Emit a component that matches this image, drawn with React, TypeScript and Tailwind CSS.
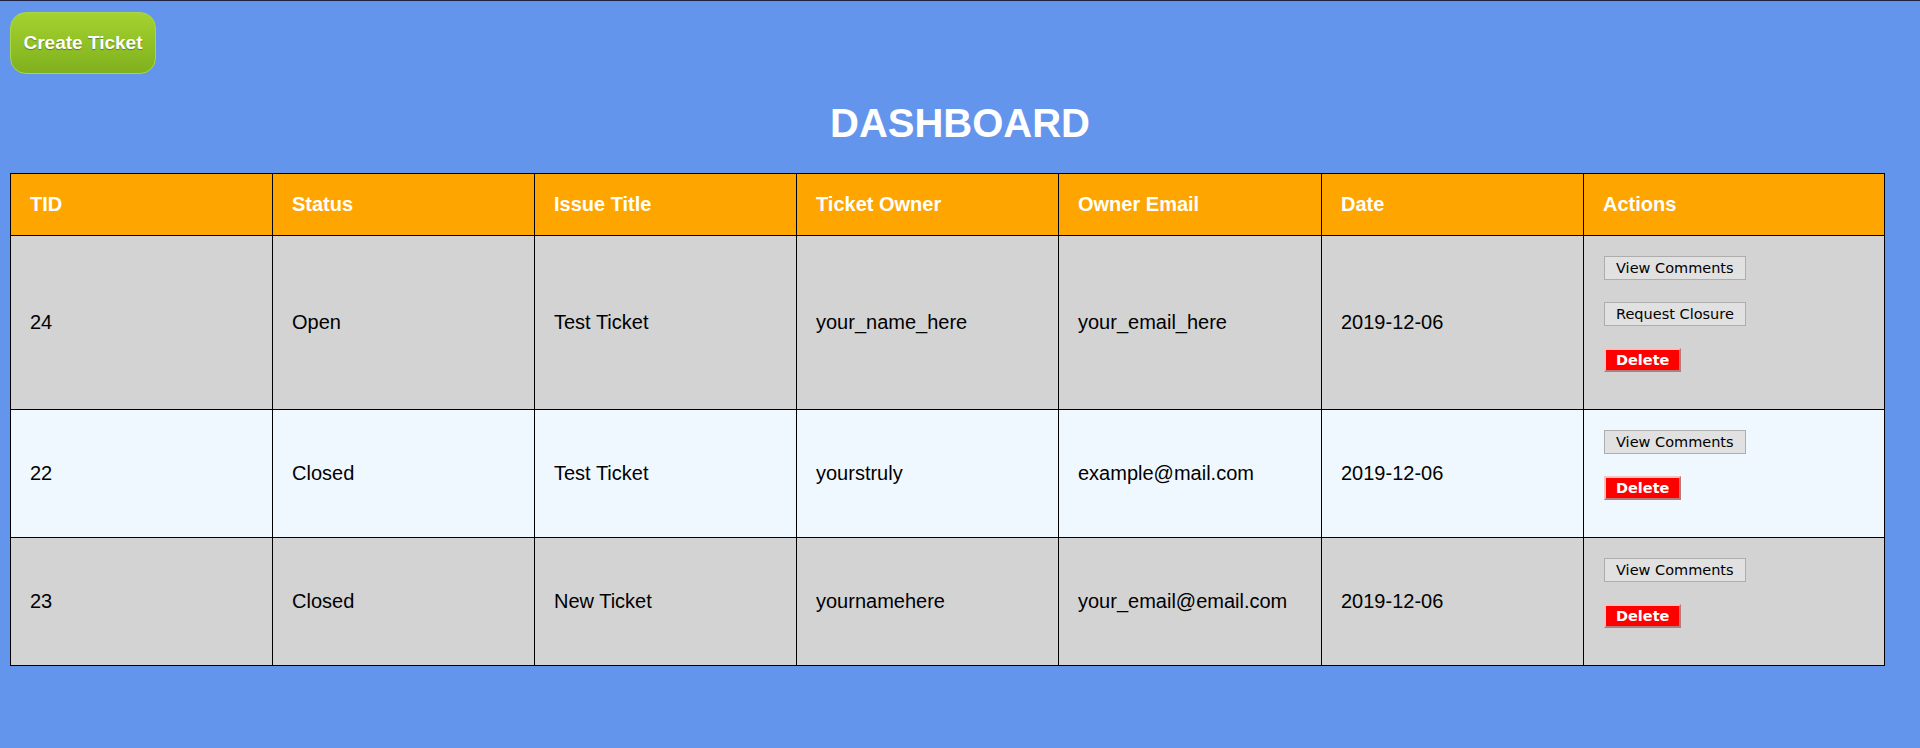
export default function App() {
  const tickets = [
    {
      id: "24",
      status: "Open",
      title: "Test Ticket",
      owner: "your_name_here",
      email: "your_email_here",
      date: "2019-12-06",
      canClose: true,
      bg: "bg-[#d3d3d3]",
    },
    {
      id: "22",
      status: "Closed",
      title: "Test Ticket",
      owner: "yourstruly",
      email: "example@mail.com",
      date: "2019-12-06",
      canClose: false,
      bg: "bg-[#f0f8ff]",
    },
    {
      id: "23",
      status: "Closed",
      title: "New Ticket",
      owner: "yournamehere",
      email: "your_email@email.com",
      date: "2019-12-06",
      canClose: false,
      bg: "bg-[#d3d3d3]",
    },
  ];

  const headers = ["TID", "Status", "Issue Title", "Ticket Owner", "Owner Email", "Date", "Actions"];

  const grayBtn =
    "h-[24px] px-[11px] border border-[#adadad] bg-[#e1e1e1] text-[14.5px] leading-none text-black font-['DejaVu_Sans',Tahoma,sans-serif]";

  return (
    <div className="min-h-[748px] border-t border-[#1b2340] bg-[#6495ed] font-['Liberation_Sans',Arial,sans-serif]">
      <button className="ml-[10px] mt-[11px] flex h-[62px] w-[146px] items-center justify-center rounded-[16px] border border-[#a8d64a] bg-linear-to-b from-[#a5d22f] to-[#7fb11e] text-[19px] font-bold text-white [text-shadow:0_1px_1px_rgba(0,0,0,0.35)]">
        Create Ticket
      </button>

      <h1 className="mt-[26px] text-center text-[40px] font-bold leading-[46px] text-white">
        DASHBOARD
      </h1>

      <table className="ml-[10px] mt-[27px] w-[1875px] table-fixed border-collapse">
        <thead>
          <tr className="bg-[#ffa500]">
            {headers.map((h, i) => (
              <th
                key={h}
                className={`${i === 4 ? "w-[263px]" : i === 6 ? "" : "w-[262px]"} border border-black px-[19px] py-[19px] text-left text-[20px] font-bold leading-[23px] text-white`}
              >
                {h}
              </th>
            ))}
          </tr>
        </thead>
        <tbody>
          {tickets.map((t) => (
            <tr key={t.id} className={t.bg}>
              {[t.id, t.status, t.title, t.owner, t.email, t.date].map((v, i) => (
                <td
                  key={i}
                  className="border border-black px-[19px] py-[20px] align-middle text-[20px] leading-[23px] text-black"
                >
                  {v}
                </td>
              ))}
              <td className="border border-black px-[20px] pt-[20px] pb-[37px] align-top">
                <div className="flex flex-col items-start gap-[22px]">
                  <button className={grayBtn}>View Comments</button>
                  {t.canClose && <button className={grayBtn}>Request Closure</button>}
                  <button className="h-[24px] border-2 border-t-[#f3c4c4] border-l-[#f3c4c4] border-b-[#b57a7a] border-r-[#b57a7a] bg-[#ff0000] px-[10px] text-[14.5px] font-bold leading-none text-white font-['DejaVu_Sans',Tahoma,sans-serif]">
                    Delete
                  </button>
                </div>
              </td>
            </tr>
          ))}
        </tbody>
      </table>
    </div>
  );
}
